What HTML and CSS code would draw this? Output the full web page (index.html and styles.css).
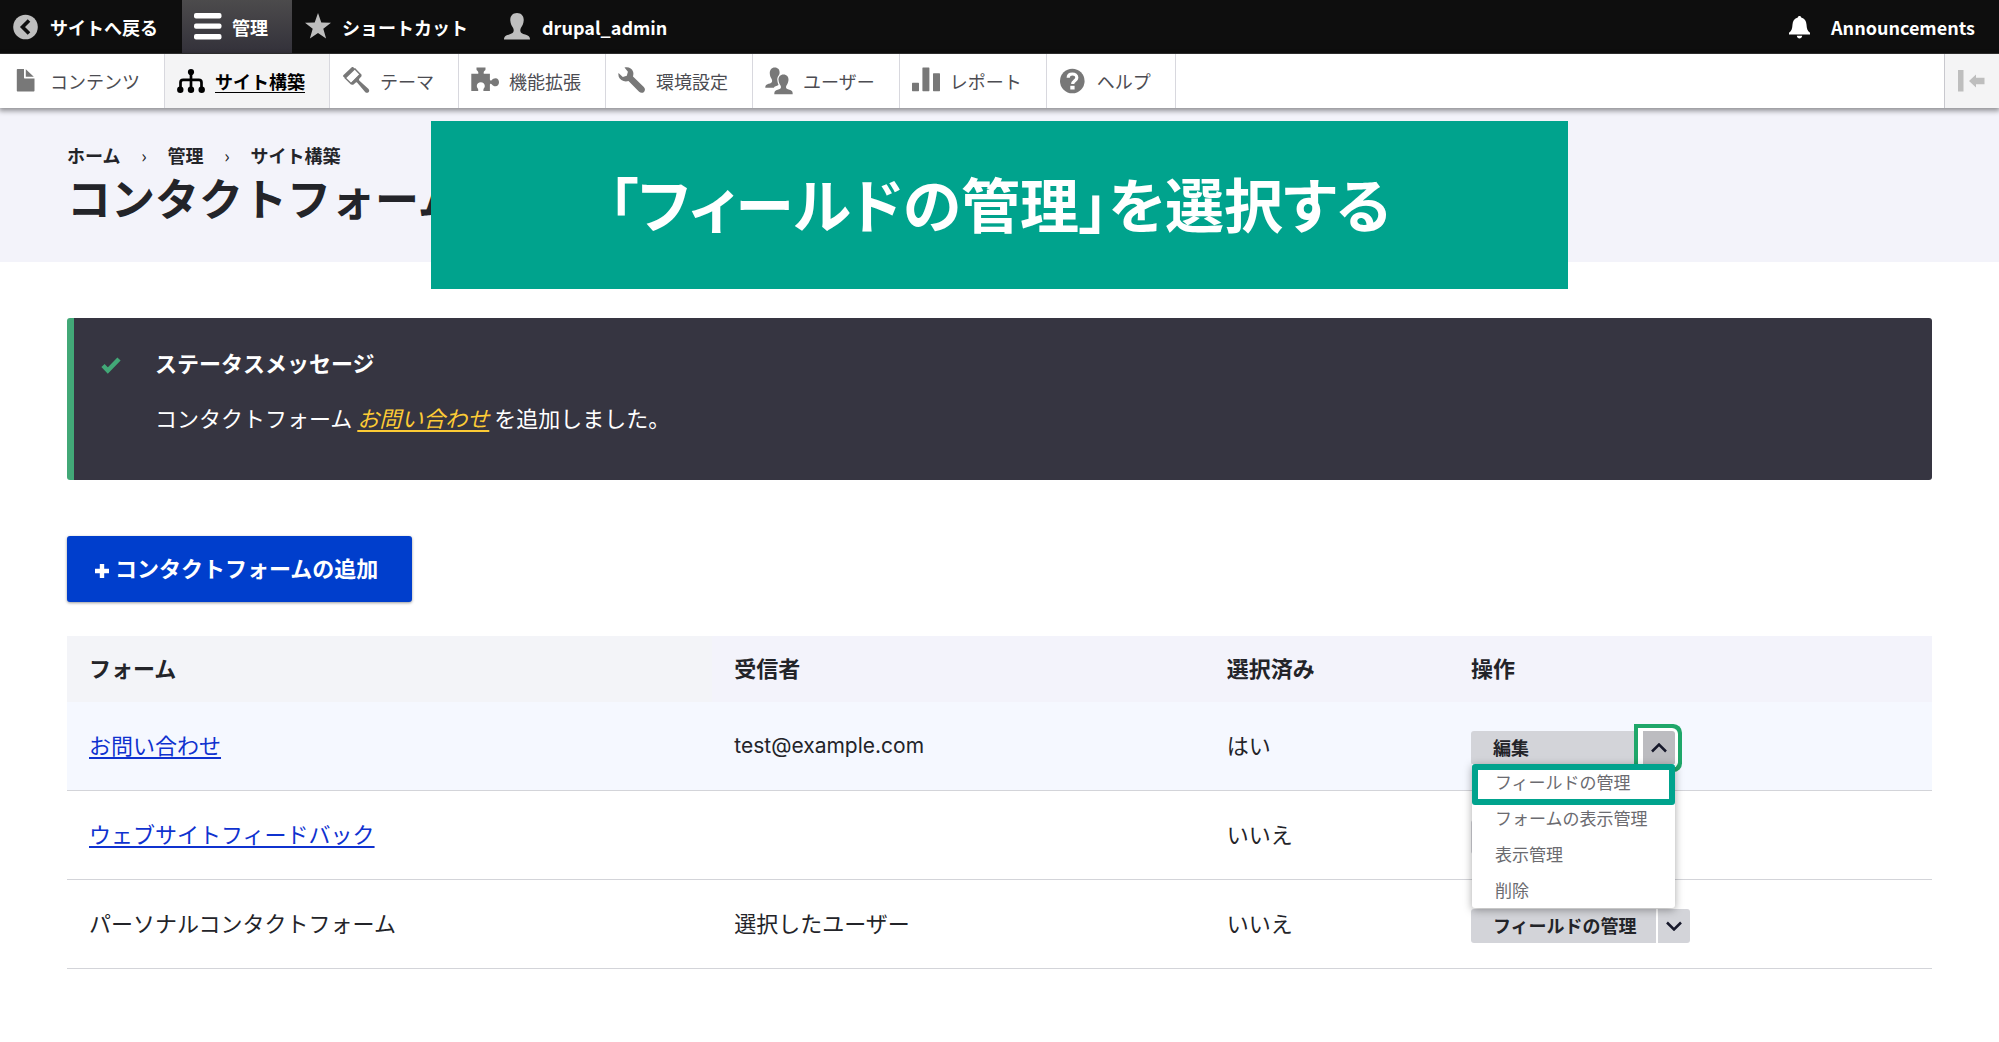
FILE: index.html
```html
<!DOCTYPE html>
<html lang="ja">
<head>
<meta charset="utf-8">
<title>コンタクトフォーム | Drupal</title>
<meta name="viewport" content="width=device-width, initial-scale=1">
<link rel="stylesheet" href="styles.css">
</head>
<body>
<nav class="bar" aria-label="ツールバー">
  <a class="bar-item" href="#">
    <svg class="icon" viewBox="0 0 28 28" aria-hidden="true"><circle cx="13.5" cy="14" r="12.3"/><path d="M17 7.5L10.5 14l6.5 6.5" fill="none" stroke="#0e0e0e" stroke-width="3.6"/></svg>
    サイトへ戻る
  </a>
  <a class="bar-item bar-item--active" href="#">
    <svg class="icon" viewBox="0 0 28 28" aria-hidden="true"><rect width="27.5" height="5.4" rx="2"/><rect y="10.4" width="27.5" height="5.4" rx="2"/><rect y="21" width="27.5" height="5.4" rx="2"/></svg>
    管理
  </a>
  <a class="bar-item" href="#">
    <svg class="icon" viewBox="0 0 28 28" aria-hidden="true"><path d="M14 0l3.3 9.4 9.7.3-7.7 6.1 2.8 9.8L14 20l-8.1 5.6 2.8-9.8L1 9.7l9.7-.3z"/></svg>
    ショートカット
  </a>
  <a class="bar-item" href="#">
    <svg class="icon" viewBox="0 0 28 28" aria-hidden="true"><path d="M13 0c4.500 0 7 3.200 6.700 7.500-.2 3.200-1.500 5.500-2.700 7.200-1 1.500-1 4.200.5 5.300 2 1.500 5.500 1.700 7.300 3.200.9.8 1.200 2 1.200 3.300H0c0-1.300.3-2.500 1.200-3.300C3 21.700 6.500 21.500 8.500 20c1.500-1.100 1.500-3.800.5-5.300-1.200-1.700-2.500-4-2.700-7.200C6 3.200 8.500 0 13 0z"/></svg>
    drupal_admin
  </a>
  <a class="bar-item bar-item--end" href="#">
    <svg class="icon" viewBox="0 0 28 28" aria-hidden="true"><path d="M10.500 3c1 0 1.600.6 1.700 1.500 3.500 1 5 3.500 5.300 7 .3 4 .8 6.500 3.500 8.300v1.700H0v-1.700c2.700-1.800 3.200-4.300 3.500-8.300.3-3.500 1.800-6 5.300-7C8.900 3.600 9.500 3 10.500 3zM7.800 22.800h5.400c-.3 1.700-1.300 2.600-2.700 2.600s-2.400-.9-2.700-2.600z"/></svg>
    Announcements
  </a>
</nav>
<nav class="tray" aria-label="管理メニュー">
  <a class="tray-item" href="#">
    <svg class="icon" viewBox="0 0 28 28" aria-hidden="true"><path d="M5.800 2H12v8.500c0 .6.400 1 1 1h9.500v12c0 .6-.4 1-1 1H5.800c-.6 0-1-.4-1-1V3c0-.6.400-1 1-1zM13.800 2.300l8 7.500h-8z"/></svg>
    コンテンツ
  </a>
  <a class="tray-item tray-item--active" href="#">
    <svg class="icon" viewBox="0 0 28 28" aria-hidden="true"><path d="M14 5v18M3.500 22v-6.500c0-2 .8-2.700 2.700-2.700h15.600c1.900 0 2.700.7 2.700 2.700V22" fill="none" stroke="currentColor" stroke-width="2.700"/><circle cx="14" cy="5" r="3.100"/><circle cx="3.300" cy="22.700" r="3.200"/><circle cx="14" cy="22.700" r="3.200"/><circle cx="24.700" cy="22.700" r="3.200"/></svg>
    サイト構築
  </a>
  <a class="tray-item" href="#">
    <svg class="icon" viewBox="0 0 28 28" aria-hidden="true"><path d="M11.300.3l2 2-9.800 9.500-2-2c-.6-.6-.6-1.200 0-1.800L9.500.5c.6-.6 1.200-.6 1.800-.2z"/><path d="M12.500 1.500l6 6.200-9.300 9-6.200-6" fill="none" stroke="currentColor" stroke-width="1.500"/><path d="M18 6.500l1 1c.8.800.8 1.500.1 2.300l-1.800 2c-.5.700-.4 1.300.2 1.900l8.800 8c1.200 1.200 1.200 2.500.2 3.500-1 .9-2.300.9-3.400-.3l-7.600-9c-.6-.7-1.300-.7-1.900-.2l-1.800 1.600c-.8.700-1.600.7-2.300-.1l-1-1z"/></svg>
    テーマ
  </a>
  <a class="tray-item" href="#">
    <svg class="icon" viewBox="0 0 28 28" aria-hidden="true"><path d="M5.500.4h9v2.200c0 1-1.800 1.600-1.800 2.700v1.500h6.200v5.500c0 1.400 1 1.700 2 .7.800-1 2-1.800 3.600-1.800 2.300 0 3.500 1.800 3.500 4s-1.200 4-3.500 4c-1.600 0-2.800-.8-3.600-1.800-1-1-2-.7-2 .7v6H12.400v-1.600c0-1 1.400-1.800 1.400-3.600 0-2.300-1.800-3.700-4-3.700s-4 1.400-4 3.700c0 1.800 1.400 2.600 1.400 3.600v1.600H.3V6.800h7V5.300c0-1.100-1.800-1.700-1.800-2.700z"/></svg>
    機能拡張
  </a>
  <a class="tray-item" href="#">
    <svg class="icon" viewBox="0 0 28 28" aria-hidden="true"><path d="M6.500.6c3.800-1 7.500.6 8.600 4.200.5 1.600.3 3-.1 4.600L25.800 20c1.500 1.500 1.500 3.500.2 4.900-1.400 1.300-3.400 1.300-4.900-.2L10.500 14c-1.800.5-3.300.6-5 0C2 12.800-.2 9.800.5 6l4.300 4 4-1.200 1.100-4z"/></svg>
    環境設定
  </a>
  <a class="tray-item" href="#">
    <svg class="icon" viewBox="0 0 28 28" aria-hidden="true"><path d="M9.800.5c3.300 0 5 2.300 4.800 5.200 0 1-.2 1.700-.6 2.400-1.700 1.700-2 4-1.500 6.500.2 1.500.8 2.500 1 3.500-2 1-4 1.500-4.700 2.600H.3c0-1.800.4-2.800 1.700-3.300 2-.8 4.500-.8 5-2.600.3-1 0-2-.5-3-1-1.500-1.500-3-1.700-5C4.500 3 6.500.5 9.800.5z"/><path d="M18.500 7.500c3.300 0 5.200 2.400 5 5.600-.2 2.300-1 3.900-1.900 5.200-.8 1.200-.8 2.700.2 3.500 1.200.9 4 1.200 5 2.200.7.700.9 1.600.9 3.300H9.300c0-1.700.2-2.600.9-3.300 1-1 3.800-1.300 5-2.200 1-.8 1-2.300.2-3.500-.9-1.300-1.700-2.900-1.900-5.200-.2-3.200 1.700-5.600 5-5.600z"/></svg>
    ユーザー
  </a>
  <a class="tray-item" href="#">
    <svg class="icon" viewBox="0 0 28 28" aria-hidden="true"><rect y="15.700" width="7" height="8.500" rx=".6"/><rect x="10.400" y=".4" width="7" height="23.800" rx=".6"/><rect x="21" y="6.200" width="7" height="18" rx=".6"/></svg>
    レポート
  </a>
  <a class="tray-item" href="#">
    <svg class="icon" viewBox="0 0 28 28" aria-hidden="true"><circle cx="13.300" cy="14" r="12.300"/><path d="M9.200 10.800c0-2.300 1.700-3.800 4.200-3.800s4.400 1.400 4.400 3.700c0 3-4.100 3.200-4.100 6.300" fill="none" stroke="#fff" stroke-width="3.200"/><rect x="11.300" y="18.800" width="4.300" height="3.700" fill="#fff"/></svg>
    ヘルプ
  </a>
  <button class="tray-toggle" type="button" aria-label="縦方向">
    <svg viewBox="0 0 28 22" width="28" height="22" aria-hidden="true"><path d="M0 0h5.500v21.500H0zM11 11l7-6.500v3.200h8.500v6.600H18v3.200z"/></svg>
  </button>
</nav>

<header class="page-head">
  <ol class="crumbs">
    <li><a href="#">ホーム</a></li>
    <li><a href="#">管理</a></li>
    <li><a href="#">サイト構築</a></li>
  </ol>
  <h1>コンタクトフォーム</h1>
</header>
<p class="banner">「フィールドの管理」を選択する</p>

<main class="content">
  <section class="message" aria-labelledby="message-title">
    <svg class="message-icon" viewBox="0 0 20 18" width="20" height="18" aria-hidden="true"><path d="M2 9.500l4.800 5L18 3" fill="none" stroke="#42a877" stroke-width="4.500"/></svg>
    <div>
      <h2 id="message-title">ステータスメッセージ</h2>
      <p>コンタクトフォーム <a href="#"><em>お問い合わせ</em></a> を追加しました。</p>
    </div>
  </section>

  <a class="add" href="#">
    <svg viewBox="0 0 14 14" width="14" height="14" aria-hidden="true"><path d="M4.800 0h4.400v4.800H14v4.400H9.200V14H4.800V9.200H0V4.800h4.800z"/></svg>
    コンタクトフォームの追加
  </a>

  <table class="forms">
    <colgroup><col class="col-form"><col class="col-to"><col class="col-sel"><col></colgroup>
    <thead>
      <tr><th class="sorted" scope="col">フォーム</th><th scope="col">受信者</th><th scope="col">選択済み</th><th scope="col">操作</th></tr>
    </thead>
    <tbody>
      <tr class="hovered">
        <td><a href="#">お問い合わせ</a></td>
        <td class="latin">test@example.com</td>
        <td>はい</td>
        <td class="ops">
          <div class="drop drop--open">
            <a class="drop-main" href="#">編集</a>
            <button class="drop-toggle" type="button" aria-expanded="true" aria-label="追加の操作を閉じる">
              <svg viewBox="0 0 16 10" width="16" height="10" aria-hidden="true"><path d="M1 8.500l7-7 7 7"/></svg>
            </button>
            <ul class="drop-menu">
              <li class="marked"><a href="#">フィールドの管理</a></li>
              <li><a href="#">フォームの表示管理</a></li>
              <li><a href="#">表示管理</a></li>
              <li><a href="#">削除</a></li>
            </ul>
          </div>
        </td>
      </tr>
      <tr>
        <td><a href="#">ウェブサイトフィードバック</a></td>
        <td></td>
        <td>いいえ</td>
        <td class="ops">
          <div class="drop">
            <a class="drop-main" href="#" aria-label="編集"></a>
            <button class="drop-toggle" type="button" aria-expanded="false" aria-label="追加の操作を表示">
              <svg viewBox="0 0 16 10" width="16" height="10" aria-hidden="true"><path d="M1 1.500l7 7 7-7"/></svg>
            </button>
          </div>
        </td>
      </tr>
      <tr>
        <td>パーソナルコンタクトフォーム</td>
        <td>選択したユーザー</td>
        <td>いいえ</td>
        <td class="ops">
          <div class="drop drop--wide">
            <a class="drop-main" href="#">フィールドの管理</a>
            <button class="drop-toggle" type="button" aria-expanded="false" aria-label="追加の操作を表示">
              <svg viewBox="0 0 16 10" width="16" height="10" aria-hidden="true"><path d="M1 1.500l7 7 7-7"/></svg>
            </button>
          </div>
        </td>
      </tr>
    </tbody>
  </table>
</main>
</body>
</html>
```
FILE: styles.css
```css
* {
  box-sizing: border-box;
}

body {
  margin: 0;
  position: relative;
  background: #fff;
  color: #232429;
  font-family: "Noto Sans CJK JP", sans-serif;
  font-size: 22px;
  line-height: 34px;
}

h1, h2, p, ol, ul {
  margin: 0;
  padding: 0;
}

ol, ul {
  list-style: none;
}

a {
  color: #0f32cf;
  text-underline-offset: 3px;
}

/* Top bar */
.bar {
  display: flex;
  height: 54px;
  background: #0e0e0e;
  border-bottom: 1px solid #333;
}

.bar-item {
  display: flex;
  align-items: center;
  gap: 10px;
  padding: 0 24px 0 12px;
  color: #fff;
  font-size: 18px;
  font-weight: 700;
  text-decoration: none;
  white-space: nowrap;
}

.bar-item--active {
  background: linear-gradient(#4c4b4c, #33313a);
}

.bar-item--end {
  gap: 14px;
  margin-left: auto;
}

.icon {
  flex: none;
  width: 28px;
  height: 28px;
  fill: currentColor;
}

.bar .icon {
  color: #bebebe;
}

.bar .bar-item--active .icon,
.bar .bar-item--end .icon {
  color: #fff;
}

/* Administration tray */
.tray {
  display: flex;
  position: relative;
  height: 54px;
  background: #fff;
  box-shadow: 0 2px 5px 1px rgba(0, 0, 0, 0.4);
}

.tray-item {
  display: flex;
  align-items: center;
  gap: 10px;
  padding: 0 24px 0 12px;
  border-right: 1px solid #d8d8de;
  color: #4c4c52;
  font-size: 18px;
  text-decoration: none;
  white-space: nowrap;
}

.tray .icon {
  color: #787878;
}

.tray-item--active {
  background: #f4f4f5;
  color: #000;
  font-weight: 700;
  text-decoration: underline;
}

.tray .tray-item--active .icon {
  color: #000;
}

.tray-toggle {
  width: 55px;
  margin-left: auto;
  padding: 0;
  border: 0;
  border-left: 1px solid #c8c8ce;
  background: #f4f4f5;
  fill: #bebebe;
}

.tray-toggle svg {
  display: block;
  margin: 0 auto;
}

/* Page heading */
.page-head {
  padding: 35px 67px 37px;
  background: #f3f3fa;
}

.crumbs {
  display: flex;
  font-size: 18px;
  font-weight: 700;
  line-height: 24px;
}

.crumbs a {
  color: inherit;
  text-decoration: none;
}

.crumbs li + li::before {
  content: "›";
  display: inline-block;
  width: 47px;
  font-weight: 400;
  text-align: center;
}

h1 {
  margin-top: 2px;
  font-size: 44px;
  line-height: 56px;
}

/* Callout laid over the page */
.banner {
  position: absolute;
  top: 121px;
  right: 0;
  left: 0;
  width: 1137px;
  max-width: 100%;
  margin: 0 auto;
  padding: 38px 0 42px;
  background: #00a38d;
  color: #fff;
  font-size: 59px;
  font-weight: 700;
  font-feature-settings: "palt";
  line-height: 88px;
  text-align: center;
}

.content {
  padding: 56px 67px;
}

/* Status message */
.message {
  display: flex;
  gap: 34px;
  padding: 26px 27px 45px;
  border-left: 7px solid #42a877;
  border-radius: 3px;
  background: #363541;
  color: #fff;
  line-height: 36px;
}

.message-icon {
  flex: none;
  margin-top: 12px;
}

.message h2 {
  font-size: 22px;
  line-height: 36px;
}

.message p {
  margin-top: 19px;
}

.message a {
  color: #fdcb35;
}

/* Primary action */
.add {
  display: inline-flex;
  align-items: center;
  gap: 6px;
  margin: 56px 0 34px;
  padding: 14px 34px 18px 28px;
  border-radius: 3px;
  background: #003ecc;
  box-shadow: 0 1px 3px rgba(0, 0, 0, 0.4);
  color: #fff;
  fill: #fff;
  font-weight: 700;
  text-decoration: none;
  vertical-align: top;
}

.add svg {
  margin-top: 8px;
}

/* Forms table */
.forms {
  width: 100%;
  border-collapse: separate;
  border-spacing: 0;
  table-layout: fixed;
}

.col-form {
  width: 34.6%;
}

.col-to {
  width: 26.4%;
}

.col-sel {
  width: 13.1%;
}

.forms th {
  padding: 14px 22px 18px;
  background: #f3f3fb;
  text-align: left;
}

.forms .sorted {
  background: #f3f4f8;
}

.forms td {
  padding: 25px 22px 29px;
  border-bottom: 1px solid #d3d4d9;
}

.forms .latin {
  padding: 27px 22px;
  font-family: Inter, sans-serif;
  font-size: 21px;
}

.hovered {
  background: #f5f8ff;
}

.forms .ops {
  padding: 29px 22px 25px;
}

/* Split buttons */
.drop {
  display: flex;
  position: relative;
  width: 204px;
  height: 34px;
  font-size: 18px;
  line-height: 32px;
}

.drop--wide {
  width: 219px;
}

.drop-main {
  flex: 1;
  padding-left: 22px;
  border-radius: 3px 0 0 3px;
  background: #d3d4d9;
  color: #232429;
  font-weight: 700;
  text-decoration: none;
}

.drop-toggle {
  width: 34px;
  height: 34px;
  padding: 0;
  border: 0;
  border-left: 2px solid #fff;
  border-radius: 0 3px 3px 0;
  background: #d3d4d9;
}

.drop-toggle svg {
  display: block;
  margin: 0 auto;
  fill: none;
  stroke: #16182a;
  stroke-width: 2.5;
}

.drop--open .drop-toggle {
  background: #bcbcc0;
  box-shadow: 0 0 0 3px #fff, 0 0 0 7px #1fa76a;
}

.drop-menu {
  position: absolute;
  z-index: 2;
  top: 33px;
  left: 1px;
  width: 203px;
  border-radius: 0 0 3px 3px;
  background: #fff;
  box-shadow: 0 2px 8px rgba(0, 0, 0, 0.35);
}

.drop-menu a {
  display: block;
  padding: 0 23px;
  color: #6b6b70;
  font-size: 17px;
  line-height: 36px;
  text-decoration: none;
  white-space: nowrap;
}

.marked {
  position: relative;
}

.marked::after {
  content: "";
  position: absolute;
  inset: 0 0 -5px;
  border: 6px solid #00a38d;
  border-radius: 3px;
  pointer-events: none;
}
```
